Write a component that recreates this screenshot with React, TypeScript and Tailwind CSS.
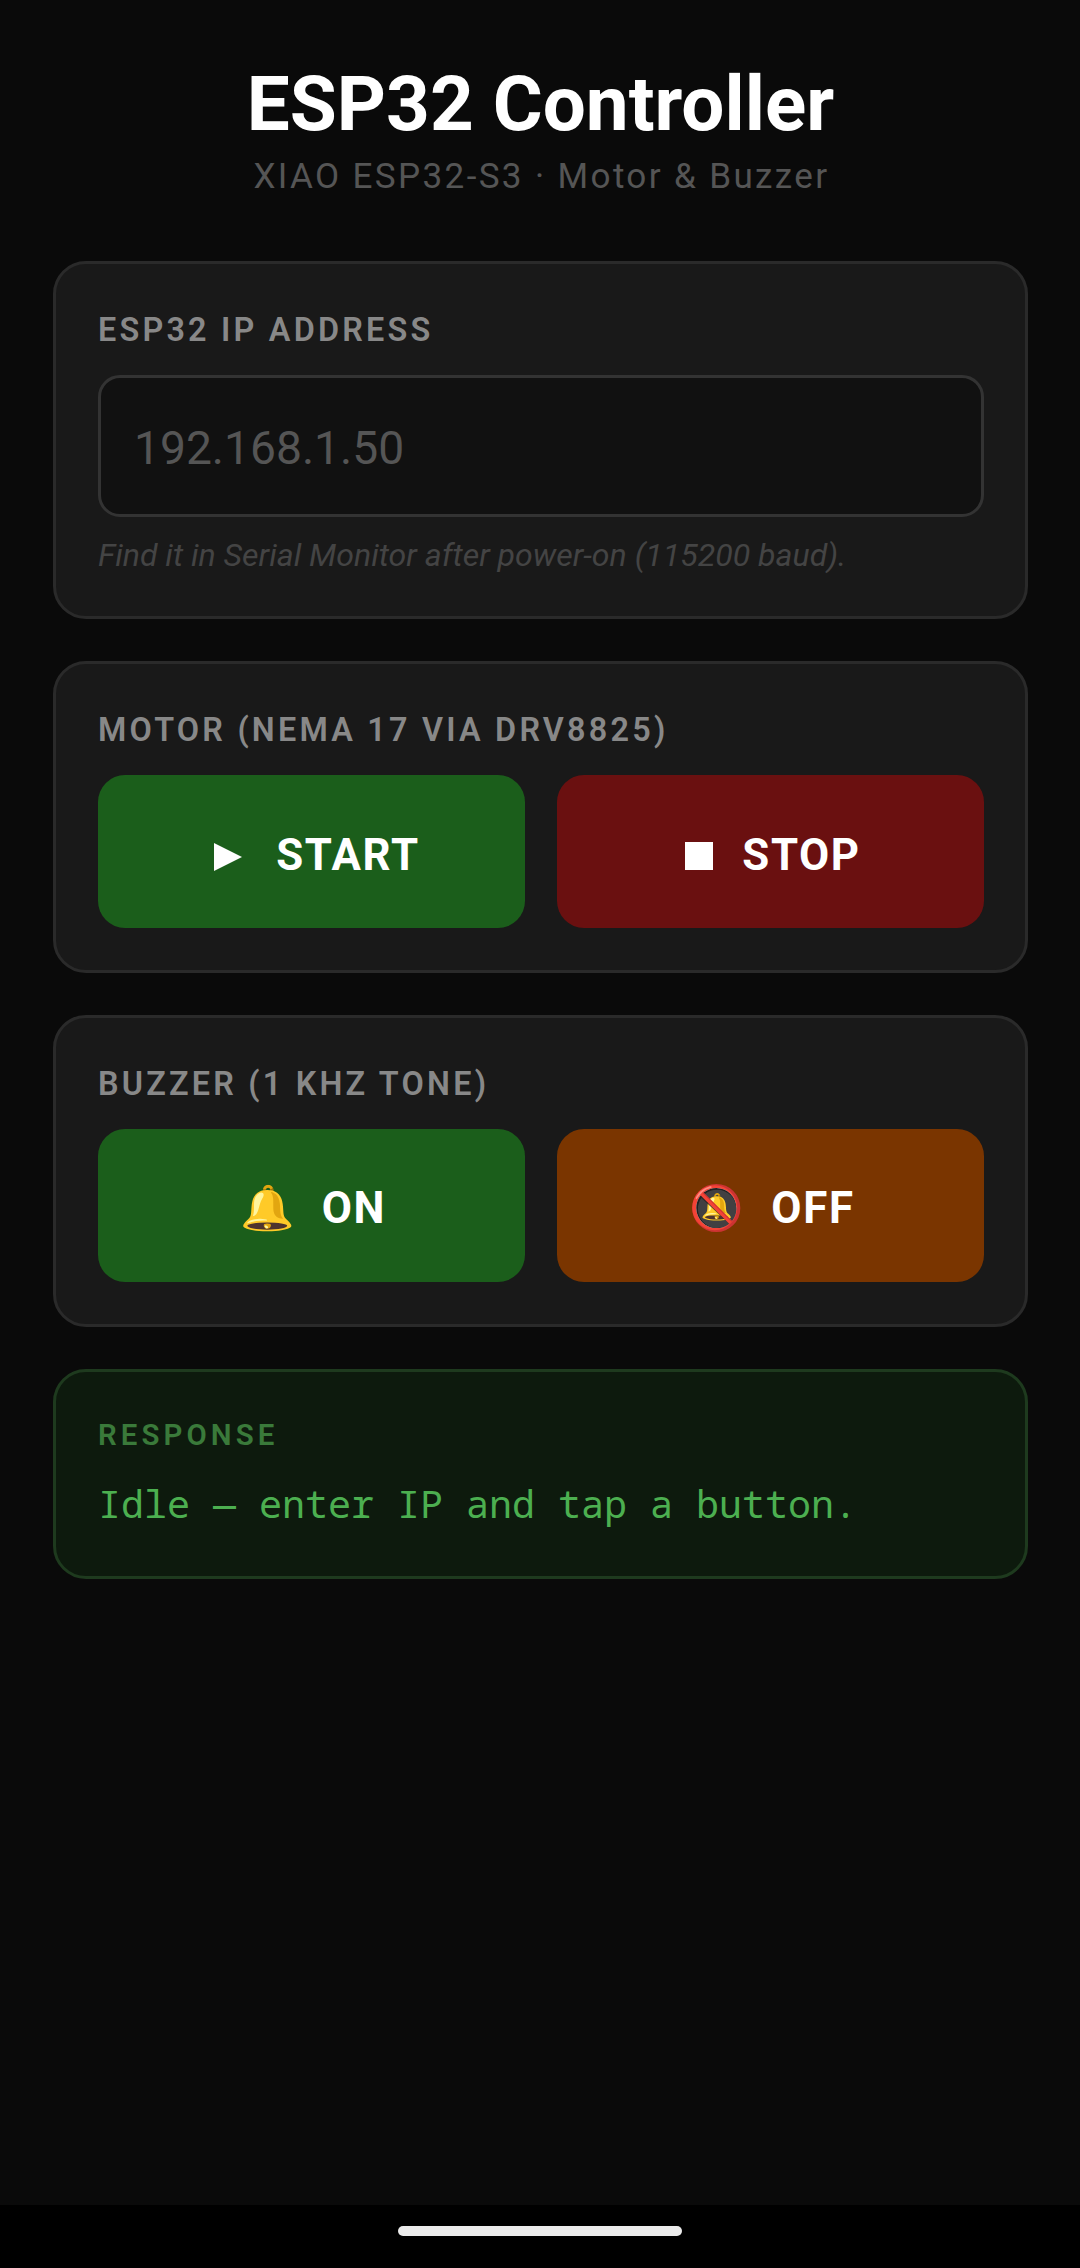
import { useState } from "react";
import type { ReactNode } from "react";

const CARD_CLASS =
  "rounded-[33px] border-[3px] border-[#2a2a2a] bg-[#191919] pt-[42px] pr-[41px] pb-[42px] pl-[42px]";

const BUTTON_CLASS =
  "flex h-[153px] flex-1 cursor-pointer items-center justify-center rounded-[27px] text-[43.8px] leading-[52px] font-bold whitespace-pre text-white";

const IDLE_MESSAGE = "Idle — enter IP and tap a button.";

const Card = ({ title, children }: { title: string; children: ReactNode }) => (
  <section className={CARD_CLASS}>
    <h2 className="mb-[22px] pt-px text-[32.4px] leading-[46px] font-semibold tracking-[3.2px] text-[#888888] uppercase">
      {title}
    </h2>
    {children}
  </section>
);

const App = () => {
  const [ip, setIp] = useState("");
  const [response, setResponse] = useState(IDLE_MESSAGE);

  const send = (path: string) => {
    if (!ip.trim()) {
      setResponse("Enter the IP address first.");
      return;
    }
    setResponse(`GET http://${ip.trim()}/${path}`);
  };

  return (
    <div className="flex h-[2268px] w-[1080px] flex-col bg-[#0a0a0a] font-['Roboto',sans-serif]">
      <main className="flex flex-1 flex-col pt-[59px] pr-[52px] pl-[53px]">
        {/* Heading */}
        <header className="mb-16 text-center">
          <h1 className="text-[76.4px] leading-[90px] font-bold text-white">
            ESP32 Controller
          </h1>
          <p className="mt-[6px] pl-[2px] text-[35.1px] leading-[42px] tracking-[2.35px] text-[#555555]">
            XIAO ESP32-S3 · Motor &amp; Buzzer
          </p>
        </header>

        <div className="flex flex-col gap-[42px]">
          <Card title="ESP32 IP Address">
            <input
              type="text"
              value={ip}
              onChange={(e) => setIp(e.target.value)}
              placeholder="192.168.1.50"
              className="block h-[142px] w-full rounded-[22px] border-[3px] border-[#333333] bg-[#111111] px-[33px] pt-1 text-[46.2px] text-white outline-none placeholder:text-[#555555]"
            />
            <p className="mt-[19px] text-[32.1px] leading-[38px] text-[#444444] italic">
              Find it in Serial Monitor after power-on (115200 baud).
            </p>
          </Card>

          <Card title="Motor (NEMA 17 via DRV8825)">
            <div className="flex gap-8">
              <button
                onClick={() => send("motor/start")}
                className={`${BUTTON_CLASS} bg-[#1b5e1b] pt-[7px] tracking-[1.7px]`}
              >
                <svg
                  viewBox="0 0 28 28"
                  className="mt-[3px] mr-[34px] ml-[11px] h-7 w-7 fill-white"
                >
                  <path d="M0 0L28 14L0 28Z" />
                </svg>
                START
              </button>
              <button
                onClick={() => send("motor/stop")}
                className={`${BUTTON_CLASS} bg-[#6a1010] pt-[7px] tracking-[1.6px]`}
              >
                <svg
                  viewBox="0 0 28 28"
                  className="mt-[2px] mr-[29px] ml-[5px] h-7 w-7 fill-white"
                >
                  <path d="M0 0H28V28H0Z" />
                </svg>
                STOP
              </button>
            </div>
          </Card>

          <Card title="Buzzer (1 kHz tone)">
            <div className="flex gap-8">
              <button
                onClick={() => send("buzzer/on")}
                className={`${BUTTON_CLASS} bg-[#1b5e1b] pt-[5px] pl-[3px] tracking-[1.7px]`}
              >
                {"🔔  ON"}
              </button>
              <button
                onClick={() => send("buzzer/off")}
                className={`${BUTTON_CLASS} bg-[#7a3500] pt-[5px] pl-[3px] tracking-[1.7px]`}
              >
                {"🔕  OFF"}
              </button>
            </div>
          </Card>

          {/* Last reply from the board */}
          <section className="rounded-[33px] border-[3px] border-[#1e3a1e] bg-[#0d1a0d] p-[42px]">
            <h2 className="text-[29.4px] leading-[42px] font-semibold tracking-[4.1px] text-[#3a7a3a] uppercase">
              Response
            </h2>
            <p className="mt-[17px] font-['Noto_Sans_Mono','DejaVu_Sans_Mono',monospace] text-[38.35px] leading-[61px] text-[#4caf50]">
              {response}
            </p>
          </section>
        </div>
      </main>

      {/* Gesture bar */}
      <footer className="flex h-[63px] justify-center bg-black pt-[21px]">
        <div className="h-[10px] w-[284px] rounded-full bg-[#ebebeb]" />
      </footer>
    </div>
  );
};

export default App;
